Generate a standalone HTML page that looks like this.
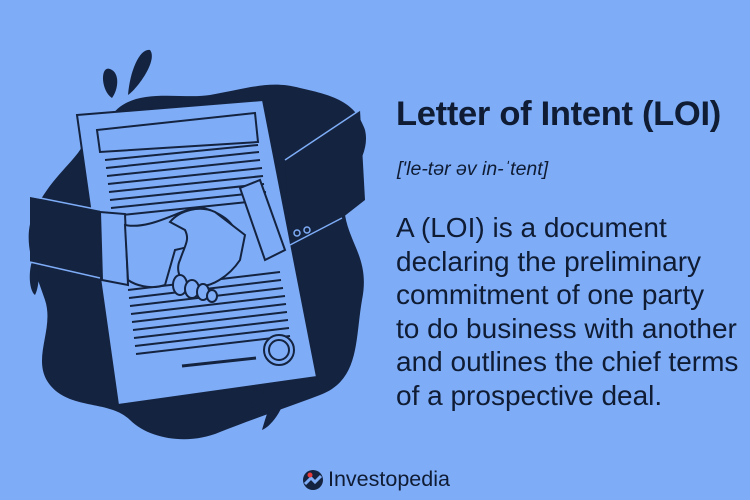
<!DOCTYPE html>
<html><head><meta charset="utf-8"><style>
body{margin:0;width:750px;height:500px;background:#7eacf7;overflow:hidden;position:relative;font-family:"Liberation Sans",sans-serif;color:#0f1c33}
.t{position:absolute;left:396px;top:95px;font-size:34.5px;font-weight:bold;white-space:nowrap;letter-spacing:-0.3px}
.p{position:absolute;left:397px;top:158px;font-size:19.5px;font-style:italic}
.b{position:absolute;left:396px;top:211px;font-size:28px;line-height:33.6px;white-space:nowrap}
.logo{position:absolute;left:302px;top:467px;font-size:21.5px;display:flex;align-items:center;gap:4px}
</style></head><body>
<svg width="750" height="500" style="position:absolute;left:0;top:0">
<g fill="#14233f">
<path d="M110,118 C130,85 180,100 210,95 C250,88 270,80 300,88 C330,95 355,100 365,130 C372,160 340,180 345,215 C350,245 370,260 362,300 C355,340 360,380 320,395 C280,410 250,420 220,432 C190,445 150,440 130,420 C110,400 70,410 50,385 C30,360 55,330 45,300 C35,270 20,240 35,210 C50,180 70,165 80,150 C90,135 100,125 110,118Z"/>
<path d="M112,70 C100,62 100,90 112,98 C118,90 120,75 112,70Z"/>
<path d="M150,50 C140,48 130,70 128,95 C138,88 158,60 150,50Z"/>
<path d="M285,380 C275,385 265,420 262,430 C275,425 292,395 285,380Z"/>
<path d="M262,375 C255,380 250,400 252,408 C262,400 268,385 262,375Z"/>
<path d="M35,255 C28,265 28,290 35,295 C40,285 40,265 35,255Z"/>
</g>
<g fill="none" stroke="#14233f" stroke-width="2">
<polygon points="77,115 263,100 317,377 118,405" fill="#7eacf7"/>
<polygon points="97,130 255,113 258,142 100,152"/>
<path d="M105,160 L258,145 M106,168 L259,152 M107,176 L260,160 M108,184 L262,168 M109,192 L263,176 M110,200 L264,184 M111,208 L266,192 M112,216 L267,200"/>
<path d="M128,290 L280,272 M129,298 L281,280 M130,306 L283,288 M131,314 L285,296 M132,322 L286,304 M133,330 L287,312 M134,338 L288,320 M135,346 L289,328 M136,354 L290,336"/>
<path d="M182,366 L256,358" stroke-width="3"/>
</g>
<circle cx="279" cy="350" r="15" fill="#7eacf7" stroke="#14233f" stroke-width="2"/>
<circle cx="279" cy="350" r="10" fill="none" stroke="#14233f" stroke-width="2"/>
<g fill="#14233f">
<path d="M30,197 L100,210 L102,280 L30,262Z"/>
<path d="M285,160 L360,110 L365,200 L342,218 L290,245Z"/>
</g>
<g fill="#7eacf7" stroke="#14233f" stroke-width="2">
<path d="M100,212 L125,214 L128,285 L102,280Z"/>
<path d="M125,225 C150,230 180,210 195,208 C205,206 225,215 232,225 C215,240 185,248 175,250 L165,285 C150,290 135,285 128,280Z"/>
<path d="M240,188 L260,180 L285,250 L265,260Z"/>
<path d="M170,222 C180,210 200,205 215,212 L245,235 L240,260 C230,275 210,290 195,285 C180,285 175,270 180,260 C185,245 190,240 185,230 Z"/>
<ellipse cx="180" cy="285" rx="7" ry="10"/>
<ellipse cx="192" cy="289" rx="7" ry="9"/>
<ellipse cx="203" cy="292" rx="6" ry="8"/>
<ellipse cx="212" cy="296" rx="5" ry="6"/>
</g>
<g stroke="#7eacf7" stroke-width="1.5" fill="none">
<path d="M30,196 L100,210 M30,262 L100,278 M285,160 L360,110 M290,245 L342,218"/>
</g>
<circle cx="297" cy="233" r="3" fill="none" stroke="#7eacf7" stroke-width="1.5"/>
<circle cx="307" cy="230" r="3" fill="none" stroke="#7eacf7" stroke-width="1.5"/>
</svg>
<div class="t">Letter of Intent (LOI)</div>
<div class="p">['le-tər əv in-ˈtent]</div>
<div class="b">A (LOI) is a document<br>declaring the preliminary<br>commitment of one party<br>to do business with another<br>and outlines the chief terms<br>of a prospective deal.</div>
<div class="logo"><svg width="22" height="22" viewBox="0 0 22 22"><circle cx="11" cy="11" r="10" fill="#14233f"/><path d="M3,15 L9,9 L13,13 L19,7" stroke="#7eacf7" stroke-width="3" fill="none"/><circle cx="8" cy="6" r="2.5" fill="#e53b3b"/></svg><span>Investopedia</span></div>
</body></html>
